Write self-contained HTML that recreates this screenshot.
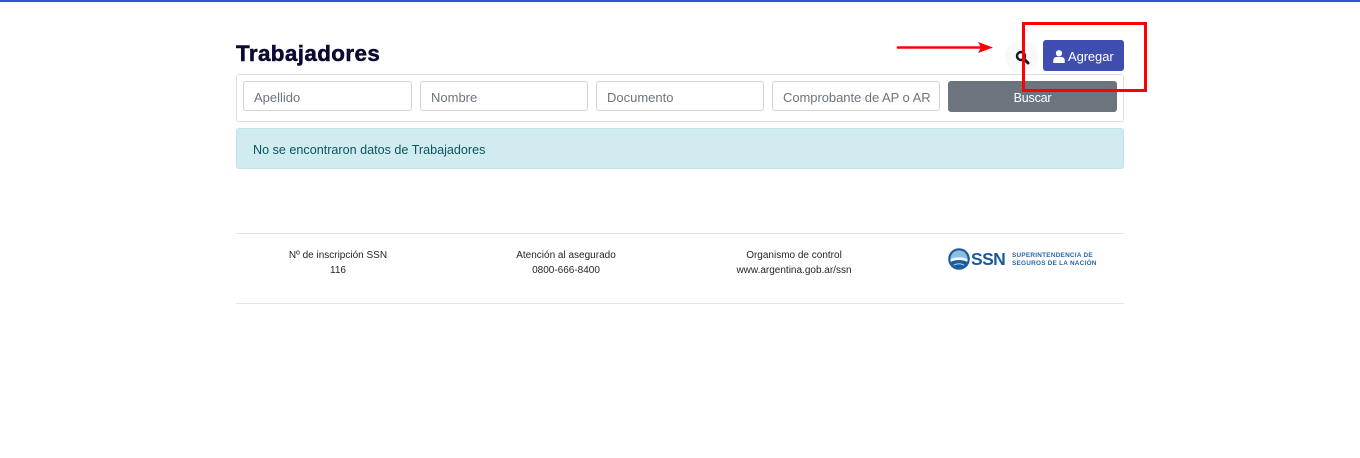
<!DOCTYPE html>
<html lang="es">
<head>
<meta charset="utf-8">
<title>Trabajadores</title>
<style>
html,body{margin:0;padding:0;background:#fff;}
body{position:relative;width:1360px;height:458px;overflow:hidden;font-family:"Liberation Sans",sans-serif;color:#212529;}
.a{position:absolute;box-sizing:border-box;}
.t{position:absolute;white-space:nowrap;}
.inp{position:absolute;box-sizing:border-box;top:81px;height:30px;background:#fff;border:1px solid #ced4da;border-radius:3px;overflow:hidden;color:#6c757d;font-size:13px;line-height:32px;padding-left:10px;white-space:nowrap;}
.f{position:absolute;text-align:center;font-size:10px;line-height:15px;color:#212529;white-space:nowrap;}
</style>
</head>
<body>
<div class="a" style="left:0;top:0;width:1360px;height:2px;background:#2f55d4"></div>

<div class="t" style="left:236px;top:40px;font-size:22.4px;line-height:28px;font-weight:bold;color:#0a0a32;-webkit-text-stroke:.5px #0a0a32;letter-spacing:.4px">Trabajadores</div>

<div class="a" style="left:1005px;top:40px;width:33px;height:33px;border-radius:50%;background:#f8f9fa"></div>
<svg class="a" style="left:1015px;top:50px" width="15" height="15" viewBox="0 0 15 15"><circle cx="6" cy="6" r="4" fill="none" stroke="#111827" stroke-width="2.4"/><path d="M9.2 9.2L13 13" stroke="#111827" stroke-width="3" stroke-linecap="round"/></svg>

<div class="a" style="left:1043px;top:40px;width:81px;height:31px;background:#3f4db0;border-radius:3px"></div>
<svg class="a" style="left:1053px;top:50px" width="12" height="13" viewBox="0 0 13 14"><circle cx="6.5" cy="3.5" r="3.4" fill="#fff"/><path d="M0.3 14V11.2C0.3 9 2 7.6 4 7.6H9C11 7.6 12.7 9 12.7 11.2V14Z" fill="#fff"/></svg>
<div class="t" style="left:1068px;top:48px;font-size:13px;line-height:17px;color:#fff;letter-spacing:-.1px">Agregar</div>

<div class="a" style="left:236px;top:74px;width:888px;height:48px;border:1px solid #dfe0e2;border-radius:3px;background:#fff"></div>
<div class="inp" style="left:243px;width:169px">Apellido</div>
<div class="inp" style="left:420px;width:168px">Nombre</div>
<div class="inp" style="left:596px;width:168px">Documento</div>
<div class="inp" style="left:772px;width:168px"><span style="display:block;width:147px;overflow:hidden;letter-spacing:-.05px">Comprobante de AP o ART</span></div>
<div class="a" style="left:948px;top:81px;width:169px;height:31px;background:#6c757d;border-radius:3px;color:#fff;font-size:12.5px;line-height:34px;text-align:center;letter-spacing:-.2px">Buscar</div>

<div class="a" style="left:236px;top:128px;width:888px;height:41px;background:#d1ecf1;border:1px solid #bee5eb;border-radius:3px"></div>
<div class="t" style="left:253px;top:142px;font-size:12.6px;line-height:16px;color:#0c5460">No se encontraron datos de Trabajadores</div>

<div class="a" style="left:236px;top:233px;width:888px;height:1px;background:#e6e6e6"></div>
<div class="a" style="left:236px;top:303px;width:888px;height:1px;background:#e6e6e6"></div>

<div class="f" style="left:238px;width:200px;top:248px">Nº de inscripción SSN<br>116</div>
<div class="f" style="left:466px;width:200px;top:248px">Atención al asegurado<br>0800-666-8400</div>
<div class="f" style="left:694px;width:200px;top:248px">Organismo de control<br>www.argentina.gob.ar/ssn</div>

<svg class="a" style="left:948px;top:248px" width="22" height="22" viewBox="0 0 22 22">
<circle cx="11" cy="11" r="10.8" fill="#1c5a9c"/>
<circle cx="11" cy="11" r="8.6" fill="#8fbde0"/>
<path d="M2.4 11.5C5.5 8.6 16.5 8.6 19.6 11.5L19.2 14C15.5 11.5 6.5 11.5 2.8 14Z" fill="#f2f8fc"/>
<path d="M2.8 14C6.5 11.5 15.5 11.5 19.2 14C17.5 17.5 14.5 19.6 11 19.6C7.5 19.6 4.5 17.5 2.8 14Z" fill="#1c5a9c"/>
<path d="M6 17C9 15.6 13 15.6 16 17" fill="none" stroke="#a8cde8" stroke-width="1.2"/>
</svg>
<div class="t" style="left:971px;top:249px;font-size:17.5px;line-height:20px;font-weight:bold;color:#1c5a9c;letter-spacing:-.6px">SSN</div>
<div class="t" style="left:1012px;top:252px;font-size:6.4px;line-height:7.5px;color:#2a66a6;letter-spacing:.25px;font-weight:bold">SUPERINTENDENCIA DE<br>SEGUROS DE LA NACIÓN</div>

<svg class="a" style="left:895px;top:40px" width="100" height="15" viewBox="0 0 100 15"><path d="M3 7.5H86" stroke="#fb0007" stroke-width="2.6" stroke-linecap="round"/><path d="M83 2L98 7.5L83 13L86 7.5Z" fill="#fb0007"/></svg>

<div class="a" style="left:1022px;top:22px;width:125px;height:70px;border:3px solid #ff0000"></div>
</body>
</html>
